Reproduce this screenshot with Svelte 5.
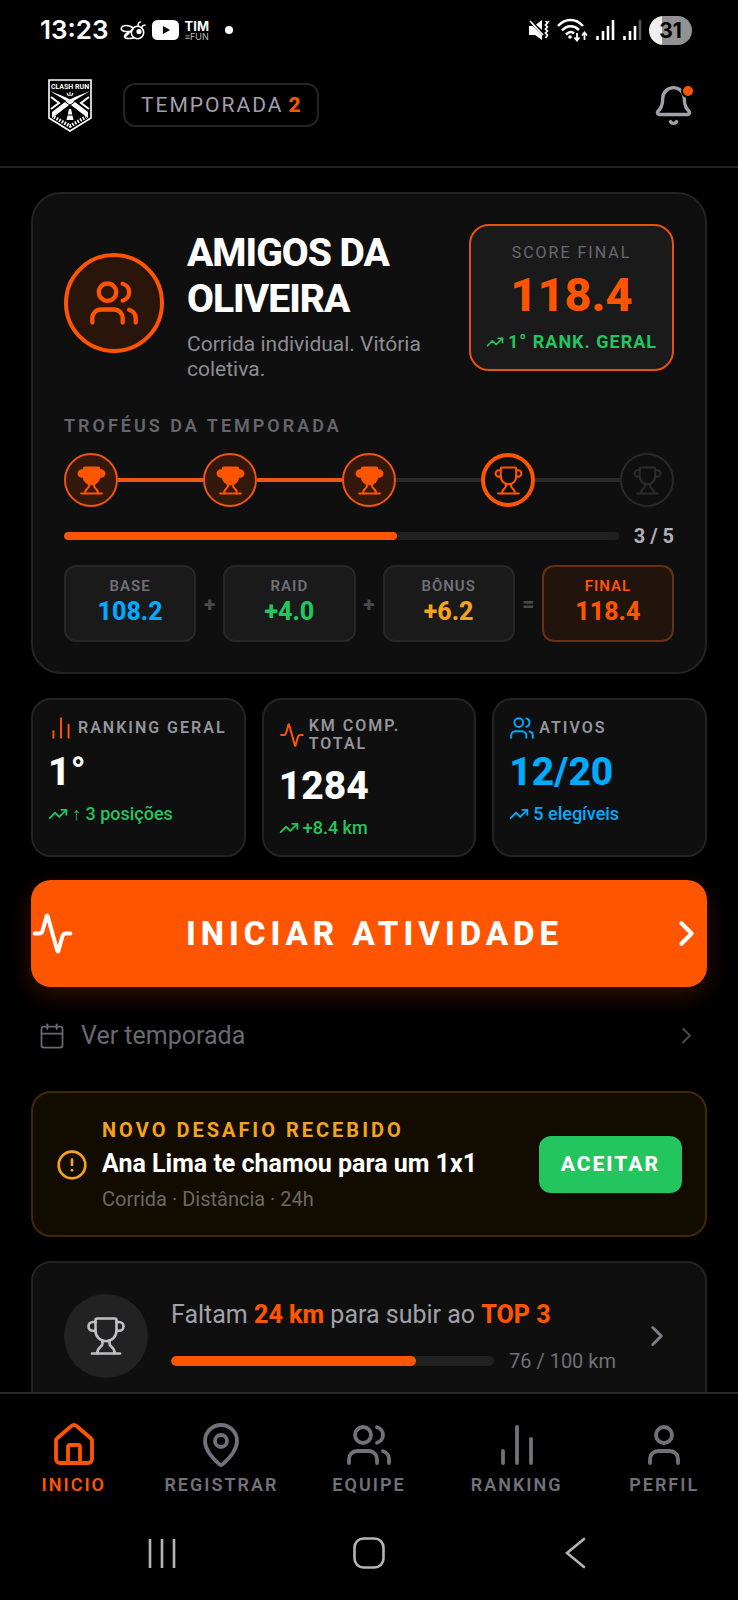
<script>
  const trophies = ['won', 'won', 'won', 'current', 'locked'];
  const formula = [
    { label: 'BASE', value: '108.2', tone: 'blue', op: '+' },
    { label: 'RAID', value: '+4.0', tone: 'green', op: '+' },
    { label: 'BÔNUS', value: '+6.2', tone: 'amber', op: '=' },
    { label: 'FINAL', value: '118.4', tone: 'final', op: '' }
  ];
  const stats = [
    { label: 'RANKING GERAL', value: '1°', trend: '↑ 3 posições', icon: 'bars', tone: 'hot' },
    { label: 'KM COMP. TOTAL', value: '1284', trend: '+8.4 km', icon: 'activity', tone: 'hot' },
    { label: 'ATIVOS', value: '12/20', trend: '5 elegíveis', icon: 'users', tone: 'cool' }
  ];
  const tabs = [
    { label: 'INICIO', icon: 'home' },
    { label: 'REGISTRAR', icon: 'pin' },
    { label: 'EQUIPE', icon: 'users' },
    { label: 'RANKING', icon: 'bars' },
    { label: 'PERFIL', icon: 'user' }
  ];
  let active = $state('INICIO');

  const icons = {
    bell: ['M3.262 15.326A1 1 0 0 0 4 17h16a1 1 0 0 0 .74-1.673C19.41 13.956 18 12.499 18 8A6 6 0 0 0 6 8c0 4.499-1.411 5.956-2.738 7.326', 'M10.268 21a2 2 0 0 0 3.464 0'],
    users: ['M16 21v-2a4 4 0 0 0-4-4H6a4 4 0 0 0-4 4v2', 'M16 3.128a4 4 0 0 1 0 7.744', 'M22 21v-2a4 4 0 0 0-3-3.87', 'M13 7a4 4 0 1 1-8 0a4 4 0 0 1 8 0z'],
    user: ['M19 21v-2a4 4 0 0 0-4-4H9a4 4 0 0 0-4 4v2', 'M16 7a4 4 0 1 1-8 0a4 4 0 0 1 8 0z'],
    trend: ['M16 7h6v6', 'm22 7-8.5 8.5-5-5L2 17'],
    trophy: ['M10 14.66v1.626a2 2 0 0 1-.976 1.696A5 5 0 0 0 7 21.978', 'M14 14.66v1.626a2 2 0 0 0 .976 1.696A5 5 0 0 1 17 21.978', 'M18 9h1.5a1 1 0 0 0 0-5H18', 'M4 22h16', 'M6 9a6 6 0 0 0 12 0V3a1 1 0 0 0-1-1H7a1 1 0 0 0-1 1z', 'M6 9H4.5a1 1 0 0 1 0-5H6'],
    bars: ['M5 21v-6', 'M12 21V3', 'M19 21V9'],
    activity: ['M22 12h-2.48a2 2 0 0 0-1.93 1.46l-2.35 8.36a.25.25 0 0 1-.48 0L9.24 2.18a.25.25 0 0 0-.48 0l-2.35 8.36A2 2 0 0 1 4.49 12H2'],
    chevron: ['m9 18 6-6-6-6'],
    calendar: ['M8 2v4', 'M16 2v4', 'M5 4h14a2 2 0 0 1 2 2v14a2 2 0 0 1-2 2H5a2 2 0 0 1-2-2V6a2 2 0 0 1 2-2z', 'M3 10h18'],
    alert: ['M22 12a10 10 0 1 1-20 0a10 10 0 0 1 20 0z', 'M12 8v4', 'M12 16h.01'],
    home: ['M15 21v-8a1 1 0 0 0-1-1h-4a1 1 0 0 0-1 1v8', 'M3 10a2 2 0 0 1 .709-1.528l7-5.999a2 2 0 0 1 2.582 0l7 5.999A2 2 0 0 1 21 10v9a2 2 0 0 1-2 2H5a2 2 0 0 1-2-2z'],
    pin: ['M20 10c0 4.993-5.539 10.193-7.399 11.799a1 1 0 0 1-1.202 0C9.539 20.193 4 14.993 4 10a8 8 0 0 1 16 0', 'M15 10a3 3 0 1 1-6 0a3 3 0 0 1 6 0z']
  };
</script>

{#snippet icon(name, size, stroke = 2, fill = 'none')}
  <svg class="icon" width={size} height={size} viewBox="0 0 24 24" {fill} stroke="currentColor" stroke-width={stroke} stroke-linecap="round" stroke-linejoin="round" aria-hidden="true">
    {#each icons[name] as d}<path {d} />{/each}
  </svg>
{/snippet}

<div class="app">
  <div class="status">
    <div class="status-side left">
      <span class="clock">13:23</span>
      <svg width="26" height="22" viewBox="0 0 26 22" fill="none" stroke="#fff" stroke-width="1.6" stroke-linecap="round" aria-hidden="true">
        <circle cx="17.500" cy="13.500" r="6.200" />
        <circle cx="19" cy="12.500" r="1.800" fill="#fff" />
        <path d="M12.500 8.500C9 6 3 5.500 1.500 8.500s3 5 10 3.500M11.500 12.500c-4 1-7 3-7 5s4 2.500 9 1.500M5 18l8-8M18 7c0-3 1-4 2.500-4M21.500 8.500c1-2 2-2.500 3.500-2.500" />
      </svg>
      <svg width="27" height="20" viewBox="0 0 27 20" aria-hidden="true">
        <rect width="27" height="20" rx="5.500" fill="#fff" /><path d="M11 6v8l7-4z" fill="#000" />
      </svg>
      <span class="carrier"><b>TIM</b><small>≡FUN</small></span>
      <i class="more"></i>
    </div>
    <div class="status-side right">
      <svg width="22" height="22" viewBox="0 0 22 22" aria-hidden="true">
        <path d="M1 7h4l9 9v5l-7-5H1z" fill="#fff" /><path d="M8 5.500L14 1v10z" fill="#fff" />
        <path d="M2 2l13 14" stroke="#fff" stroke-width="1.800" />
        <path d="M17.500 2l2 2-2 2 2 2-2 2 2 2-2 2 2 2-2 3M21 2l-1 1" stroke="#fff" stroke-width="1.700" fill="none" />
      </svg>
      <svg width="31" height="24" viewBox="0 0 31 24" fill="none" stroke="#fff" stroke-width="2.500" aria-hidden="true">
        <path d="M1 8C8 0 19 0 26 8M5 12.500C10 7 17 7 22 12M9 16.500c3-3 6-3 8-1" />
        <circle cx="13" cy="19" r="1.800" fill="#fff" stroke="none" />
        <path d="M20 15v7M17.500 19.500l2.500 3 2.500-3M27.500 22v-7M25 17.500l2.500-3 2.500 3" stroke-width="1.800" />
      </svg>
      <svg width="20" height="20" viewBox="0 0 20 20" aria-hidden="true">
        <path d="M2.500 16v4M8 11v9M13 6v14M18 0v20" stroke="#fff" stroke-width="2.600" />
      </svg>
      <svg width="20" height="20" viewBox="0 0 20 20" aria-hidden="true">
        <path d="M2.500 16v4M8 11v9M13 6v14" stroke="#fff" stroke-width="2.600" /><path d="M18 0v20" stroke="#555" stroke-width="2.600" />
      </svg>
      <span class="battery">31</span>
    </div>
  </div>

  <header>
    <svg width="44" height="53" viewBox="0 0 44 53" aria-label="Clash Run" role="img">
      <path d="M1 1h42v38L22 52 1 39z" fill="#000" stroke="#fff" stroke-width="1.600" />
      <text x="22" y="10" text-anchor="middle" font-size="7" font-weight="700" fill="#fff" font-family="Roboto, sans-serif">CLASH RUN</text>
      <path d="M2 12l18 11 4 4 16 12v-6L27 23 17 18z" fill="#fff" />
      <path d="M42 12L24 23l-4 4L4 39v-6l13-10 10-5z" fill="#fff" />
      <path d="M3 18l8 6-8 6M41 18l-8 6 8 6" fill="none" stroke="#fff" stroke-width="2" />
      <path d="M12 19l18 13M32 19L14 32" stroke="#000" stroke-width="1" />
      <path d="M22 13v4M19 14l1.500 3M25 14l-1.500 3" stroke="#fff" stroke-width="1.200" />
      <path d="M21 30h2l2.500 11h-7z" fill="#fff" /><path d="M19 36h6" stroke="#000" />
      <path d="M6 38l16 9 16-9" fill="none" stroke="#fff" stroke-width="3.500" stroke-dasharray="1.600 1.400" />
    </svg>
    <span class="season">TEMPORADA<b>2</b></span>
    <button class="bell" aria-label="Notificações">{@render icon('bell', 43, 1.9)}<i></i></button>
  </header>

  <main>
    <section class="card team">
      <div class="team-top">
        <div class="avatar">{@render icon('users', 52, 2)}</div>
        <div class="team-text">
          <h1>AMIGOS DA OLIVEIRA</h1>
          <p>Corrida individual. Vitória coletiva.</p>
        </div>
        <div class="score">
          <span class="score-label">SCORE FINAL</span>
          <strong>118.4</strong>
          <span class="score-rank">{@render icon('trend', 18, 2.2)}1° RANK. GERAL</span>
        </div>
      </div>

      <h2>TROFÉUS DA TEMPORADA</h2>
      <div class="trophies">
        {#each trophies as t, i}
          {#if i}<i class="link" class:lit={t === 'won'}></i>{/if}
          <span class="trophy {t}">{@render icon('trophy', 31, 1.6, t === 'won' ? 'currentColor' : 'none')}</span>
        {/each}
      </div>
      <div class="season-progress">
        <div class="track"><i style="width: 60%"></i></div>
        <b>3 / 5</b>
      </div>
      <div class="formula">
        {#each formula as f}
          <div class="term {f.tone}"><span>{f.label}</span><b>{f.value}</b></div>
          {#if f.op}<i>{f.op}</i>{/if}
        {/each}
      </div>
    </section>

    <section class="stats">
      {#each stats as s}
        <article class="stat {s.tone}">
          <div class="stat-head">{@render icon(s.icon, 26, 1.8)}<span>{s.label}</span></div>
          <strong>{s.value}</strong>
          <div class="stat-trend">{@render icon('trend', 20, 2.2)}{s.trend}</div>
        </article>
      {/each}
    </section>

    <div class="actions">
      <button class="start">{@render icon('activity', 43, 2.2)}<span>INICIAR ATIVIDADE</span>{@render icon('chevron', 41, 2.4)}</button>
      <a class="see-season" href="#temporada">{@render icon('calendar', 28, 1.5)}<span>Ver temporada</span>{@render icon('chevron', 27, 1.8)}</a>
    </div>

    <section class="challenge">
      {@render icon('alert', 32, 2)}
      <div>
        <h3>NOVO DESAFIO RECEBIDO</h3>
        <p class="who">Ana Lima te chamou para um 1x1</p>
        <p class="meta">Corrida · Distância · 24h</p>
      </div>
      <button>ACEITAR</button>
    </section>

    <a class="card goal" href="#ranking">
      <span class="goal-icon">{@render icon('trophy', 42, 1.5)}</span>
      <div class="goal-body">
        <p>Faltam <b>24 km</b> para subir ao <b>TOP 3</b></p>
        <div class="goal-progress">
          <div class="track"><i style="width: 76%"></i></div>
          <span>76 / 100 km</span>
        </div>
      </div>
      {@render icon('chevron', 34, 2)}
    </a>
  </main>

  <nav>
    {#each tabs as t}
      <button class:active={active === t.label} onclick={() => (active = t.label)}>{@render icon(t.icon, 48, 1.9)}<span>{t.label}</span></button>
    {/each}
  </nav>

  <div class="system">
    <button aria-label="Recentes"><svg width="32" height="32" viewBox="0 0 32 32" fill="none" stroke="#b4b4b4" stroke-width="2.600"><path d="M4 2v29M16 2v29M28 2v29" /></svg></button>
    <button aria-label="Início"><svg width="32" height="32" viewBox="0 0 32 32" fill="none" stroke="#b4b4b4" stroke-width="2.600"><rect x="1.500" y="1.500" width="29" height="29" rx="9" /></svg></button>
    <button aria-label="Voltar"><svg width="32" height="32" viewBox="0 0 32 32" fill="none" stroke="#b4b4b4" stroke-width="2.600" stroke-linecap="round"><path d="M24 2L7 16l17 14" /></svg></button>
  </div>
</div>

<style>
  :global(body) { margin: 0; background: #000; }
  .app {
    --orange: #ff5500; --green: #22c55e; --blue: #00aaff; --amber: #f5a31a;
    --gray: #a1a1aa; --muted: #71717a; --line: #2a2a2a; --surface: #0f0f0f; --raised: #1a1a1a;
    display: flex; flex-direction: column; height: 100vh; overflow: hidden;
    background: #000; color: #fff; font-family: Roboto, sans-serif;
  }
  .app :is(h1, h2, h3, p) { margin: 0; }
  button { border: 0; padding: 0; background: none; color: inherit; font: inherit; cursor: pointer; }
  a { color: inherit; text-decoration: none; }
  .icon { display: block; flex: none; }

  .status { display: flex; flex: none; justify-content: space-between; align-items: center; height: 60px; padding: 0 46px 0 40px; }
  .status-side { display: flex; align-items: center; gap: 7px; }
  .left { gap: 6px; }
  .clock { font: 600 26px/32px Inter, sans-serif; margin-right: 5px; }
  .carrier { display: flex; flex-direction: column; align-items: center; font-family: Inter, sans-serif; }
  .carrier b { font-size: 13px; line-height: 12px; }
  .carrier small { font-size: 9px; line-height: 9px; color: #bbb; }
  .more { width: 8px; height: 8px; margin-left: 10px; border-radius: 50%; background: #fff; }
  .battery { width: 43px; border-radius: 15px; background: linear-gradient(90deg, #eee 31%, #929292 31%); color: #000; font: 700 21px/29px Inter, sans-serif; text-align: center; }

  header { display: flex; flex: none; align-items: center; box-sizing: border-box; height: 108px; padding: 0 43px 16px 48px; border-bottom: 2px solid #202020; }
  .season { margin-left: 31px; padding: 0 16px; border: 2px solid #242424; border-radius: 12px; color: var(--gray); font-size: 21px; line-height: 40px; letter-spacing: 2px; }
  .season b { margin-left: 5px; color: var(--orange); font-weight: 800; letter-spacing: 0; }
  .bell { position: relative; margin-left: auto; color: var(--gray); }
  .bell i { position: absolute; top: 0; right: 0; width: 10px; height: 10px; border: 2px solid #000; border-radius: 50%; background: var(--orange); }

  main { flex: 1; min-height: 0; overflow: hidden; padding: 24px 31px 0; }
  .card { display: block; border: 2px solid #232323; background: var(--surface); }
  .team { padding: 30px 31px; border-radius: 30px; }
  .team-top { display: flex; align-items: center; }
  .avatar { display: grid; place-items: center; flex: none; box-sizing: border-box; width: 100px; height: 100px; border: 4px solid var(--orange); border-radius: 50%; background: #2a150b; color: var(--orange); }
  .team-text { flex: 1; min-width: 0; margin-left: 23px; padding-top: 6px; }
  h1 { font-size: 39px; line-height: 46px; font-weight: 800; letter-spacing: -1px; }
  .team-text p { margin-top: 10px; padding-right: 24px; color: #8d8d93; font-size: 21px; line-height: 25px; }
  .score { display: flex; flex-direction: column; align-items: center; align-self: flex-start; box-sizing: border-box; padding: 16px 15px; border: 2px solid #e65310; border-radius: 20px; background: var(--raised); }
  .score-label { color: #69696f; font-size: 16px; line-height: 22px; letter-spacing: 2px; }
  .score strong { margin: 4px 0 9px; color: var(--orange); font-size: 47px; line-height: 54px; font-weight: 800; }
  .score-rank { display: flex; align-items: center; gap: 4px; color: var(--green); font-size: 18px; line-height: 22px; font-weight: 700; letter-spacing: 1px; white-space: nowrap; }

  h2 { padding-top: 33px; color: #66666c; font-size: 18px; line-height: 22px; font-weight: 600; letter-spacing: 3px; }
  .trophies { display: flex; align-items: center; margin-top: 16px; }
  .trophy { display: grid; place-items: center; flex: none; box-sizing: border-box; width: 54px; height: 54px; border: 2px solid var(--line); border-radius: 50%; color: #2c2c2c; }
  .trophy.won { border-color: #f0560f; background: #34180b; color: var(--orange); }
  .trophy.current { border: 4px solid var(--orange); color: var(--orange); }
  .link { flex: 1; height: 4px; background: #292929; }
  .link.lit { background: #f0560f; }
  .season-progress { display: flex; align-items: center; gap: 15px; margin-top: 17px; color: #b0b0b4; font-size: 20px; line-height: 24px; }
  .track { flex: 1; height: 8px; border-radius: 5px; background: #212121; overflow: hidden; }
  .track i { display: block; height: 100%; border-radius: 5px; background: var(--orange); }

  .formula { display: flex; align-items: center; margin-top: 17px; }
  .formula > i { width: 27px; color: #4a4a4e; font-size: 21px; font-style: normal; font-weight: 800; text-align: center; }
  .term { display: flex; flex: 1; flex-direction: column; align-items: center; padding: 10px 0 13px; border: 2px solid #272727; border-radius: 12px; background: var(--raised); }
  .term span { color: #707076; font-size: 15px; line-height: 18px; font-weight: 600; letter-spacing: 1px; }
  .term b { margin-top: 2px; font-size: 25px; line-height: 30px; font-weight: 800; }
  .blue b { color: var(--blue); }
  .green b { color: var(--green); }
  .amber b { color: var(--amber); }
  .final { border-color: #6b2f12; background: #21140d; }
  .final span, .final b { color: var(--orange); }

  .stats { display: grid; grid-template-columns: repeat(3, 1fr); gap: 16px; margin-top: 24px; }
  .stat { padding: 15px 15px 16px; border: 2px solid #232323; border-radius: 20px; background: var(--surface); }
  .stat-head { display: flex; align-items: center; gap: 4px; color: var(--orange); }
  .stat-head span { padding: 2px 0; color: #95959b; font-size: 16px; line-height: 18px; font-weight: 600; letter-spacing: 2px; }
  .stat strong { display: block; margin-top: 8px; font-size: 39px; line-height: 46px; font-weight: 800; }
  .stat-trend { display: flex; align-items: center; gap: 4px; margin-top: 8px; color: var(--green); font-size: 18px; line-height: 22px; font-weight: 500; }
  .cool .stat-head, .cool strong, .cool .stat-trend { color: var(--blue); }

  .actions { margin: 23px 0; }
  .start { display: flex; align-items: center; width: 100%; height: 107px; border-radius: 20px; background: var(--orange); box-shadow: 0 8px 24px rgb(255 85 0 / 20%); font-size: 33px; font-weight: 800; letter-spacing: 5px; }
  .start span { flex: 1; padding-left: 9px; }
  .see-season { display: flex; align-items: center; height: 65px; margin-top: 16px; padding: 0 7px; color: #69696f; font-size: 25px; }
  .see-season span { flex: 1; margin-left: 15px; }
  .see-season span + :global(.icon) { color: #4a4a4e; }

  .challenge { display: flex; align-items: center; gap: 14px; padding: 24px 23px 23px; border: 2px solid #40290a; border-radius: 20px; background: #120c00; color: var(--amber); }
  .challenge div { flex: 1; }
  h3 { font-size: 20px; line-height: 26px; font-weight: 700; letter-spacing: 3px; }
  .challenge .who { margin-top: 5px; color: #fff; font-size: 25px; line-height: 32px; font-weight: 700; }
  .challenge .meta { margin-top: 6px; color: #6c6866; font-size: 20px; line-height: 26px; }
  .challenge button { padding: 0 22px; border-radius: 12px; background: var(--green); color: #fff; font-size: 21px; line-height: 57px; font-weight: 800; letter-spacing: 2px; }

  .goal { display: flex; align-items: center; margin-top: 24px; padding: 31px; border-radius: 20px; color: #7f7f85; }
  .goal-icon { display: grid; place-items: center; flex: none; width: 84px; height: 84px; border-radius: 50%; background: #222; color: #c0c0c4; }
  .goal-body { flex: 1; margin: 0 24px 0 23px; }
  .goal-body p { color: var(--gray); font-size: 25px; line-height: 34px; }
  .goal-body b { color: var(--orange); font-weight: 800; }
  .goal-progress { display: flex; align-items: center; gap: 15px; margin-top: 16px; color: #707076; font-size: 20px; line-height: 26px; }
  .goal-progress .track { height: 10px; }

  nav { display: grid; flex: none; grid-template-columns: repeat(5, 1fr); padding: 27px 0 10px; border-top: 2px solid #2a2a2a; background: #000; }
  nav button { display: flex; flex-direction: column; align-items: center; gap: 5px; color: var(--muted); font-size: 18px; line-height: 22px; font-weight: 600; letter-spacing: 2px; }
  nav button.active { color: var(--orange); }
  .system { display: flex; flex: none; justify-content: space-between; align-items: center; height: 94px; padding: 0 146px; }
  .system svg { display: block; }
</style>
